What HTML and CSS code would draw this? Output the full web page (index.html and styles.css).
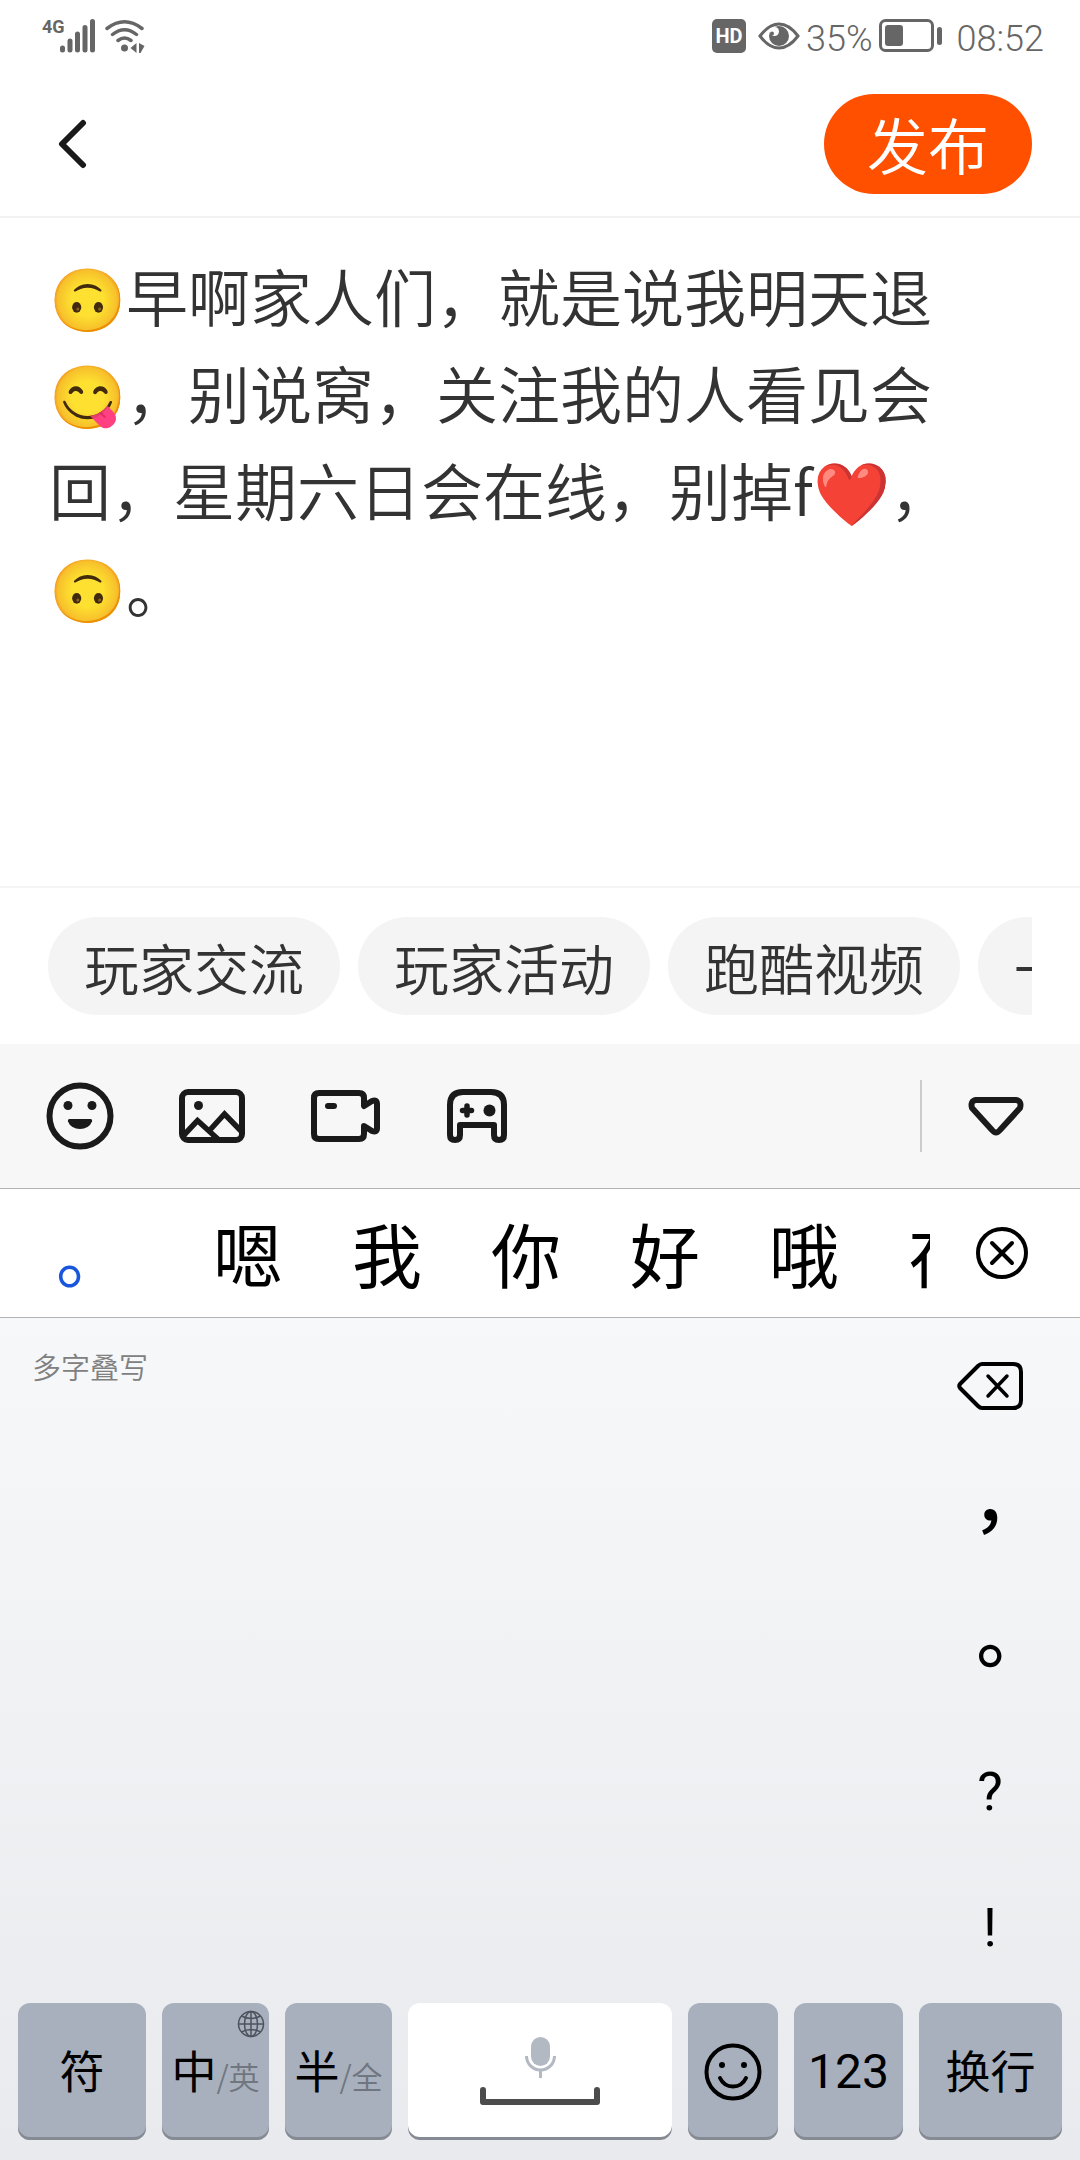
FILE: index.html
```
<!DOCTYPE html>
<html lang="zh-CN">
	<head>
		<meta charset="UTF-8">
		<meta name="viewport" content="width=device-width">
		<title>发布</title>
		<link rel="stylesheet" href="styles.css">
	</head>
	<body>
		<div class="status">
			<div class="status-left">
				<span class="net">4G</span>
				<svg width="36" height="34" viewBox="0 0 36 34" stroke="#666" stroke-width="5" stroke-linecap="round">
					<path d="M2.500 29v2M10 22v9M17.500 15v16M25 8.500v22.500M32.500 2.500v28.500"/>
				</svg>
				<svg class="wifi" width="40" height="34" viewBox="0 0 40 34" fill="none" stroke="#666" stroke-width="3.500" stroke-linecap="round">
					<path d="M2 9.500Q19.500-4 37 9.500M7.500 15.500Q19.500 6 31.500 15.500M13 21.500Q19.500 16.500 26 21.500"/>
					<circle cx="19.500" cy="29" r="3.500" fill="#666" stroke="none"/>
					<path d="M25.500 29l6-5v10zM34 24l5.500 3-4 7H34z" fill="#666" stroke="none"/>
				</svg>
			</div>
			<div class="status-right">
				<span class="hd">HD</span>
				<svg class="eye" width="42" height="28" viewBox="0 0 42 28">
					<path d="M2 14Q11 2 21 2T40 14Q31 26 21 26T2 14z" fill="none" stroke="#666" stroke-width="3"/>
					<circle cx="21" cy="14" r="10" fill="#666"/>
					<circle cx="16.500" cy="9.500" r="4.500" fill="#fff"/>
					<circle cx="14" cy="11.500" r="2" fill="#666"/>
				</svg>
				<span class="text">35%</span>
				<svg class="battery" width="64" height="34" viewBox="0 0 64 34">
					<rect x="1.500" y="1.500" width="52" height="30" rx="5" fill="none" stroke="#666" stroke-width="3"/>
					<rect x="6" y="6" width="18" height="21" rx="3" fill="#666"/>
					<rect x="58" y="8" width="5" height="18" rx="2.500" fill="#666"/>
				</svg>
				<span class="text">08:52</span>
			</div>
		</div>

		<header class="header">
			<button class="back" type="button" aria-label="返回">
				<svg width="32" height="50" viewBox="0 0 32 50" fill="none" stroke="#1a1a1a" stroke-width="6" stroke-linecap="round" stroke-linejoin="round"><path d="M27 4L6 25l21 21"/></svg>
			</button>
			<button class="publish" type="submit">发布</button>
		</header>

		<textarea class="editor" aria-label="正文" spellcheck="false">🙃早啊家人们，就是说我明天退😋，别说窝，关注我的人看见会回，星期六日会在线，别掉f❤️，🙃。</textarea>

		<nav class="topics">
			<div class="topic-list">
				<button type="button">玩家交流</button>
				<button type="button">玩家活动</button>
				<button type="button">跑酷视频</button>
				<button type="button">一</button>
			</div>
		</nav>

		<div class="toolbar">
			<button type="button" aria-label="表情">
				<svg width="68" height="68" viewBox="0 0 68 68">
					<circle cx="34" cy="34" r="30.500" fill="none" stroke="#1a1a1a" stroke-width="6"/>
					<circle cx="22" cy="23.500" r="4.500" fill="#1a1a1a"/>
					<circle cx="46" cy="23.500" r="4.500" fill="#1a1a1a"/>
					<path d="M23.500 37h21q2 0 1.500 2.500a12.500 10.500 0 0 1-24 0q-.5-2.500 1.500-2.500z" fill="#1a1a1a"/>
				</svg>
			</button>
			<button type="button" aria-label="图片">
				<svg width="68" height="56" viewBox="0 0 68 56" fill="none" stroke="#1a1a1a" stroke-width="6" stroke-linejoin="round">
					<rect x="4" y="4" width="60" height="48" rx="6"/>
					<circle cx="20.500" cy="17.500" r="4.500" fill="#1a1a1a" stroke="none"/>
					<path d="M5 48l14.500-15.500L42 53M31 43l15.500-17L64 44" stroke-width="5.500" stroke-linejoin="miter"/>
				</svg>
			</button>
			<button type="button" aria-label="视频">
				<svg width="72" height="54" viewBox="0 0 72 54" fill="none" stroke="#1a1a1a" stroke-width="6" stroke-linejoin="round" stroke-linecap="round">
					<path d="M54 17V9q0-5-5-5H9q-5 0-5 5v36q0 5 5 5h40q5 0 5-5v-8l8 5q6 2 6-4V16q0-6-6-4z" stroke="none"/>
					<path d="M54 17V9q0-5-5-5H9q-5 0-5 5v36q0 5 5 5h40q5 0 5-5v-8l8 5q5 2 5-3V15q0-5-5-3z"/>
					<path d="M18 17h6"/>
				</svg>
			</button>
			<button type="button" aria-label="游戏">
				<svg width="62" height="56" viewBox="0 0 62 56" fill="none" stroke="#1a1a1a" stroke-width="6" stroke-linejoin="round" stroke-linecap="round">
					<path d="M4 47V17Q4 4 17 4h28q13 0 13 13v30q0 5-5 5t-5-5V37H14v10q0 5-5 5t-5-5z"/>
					<path d="M21 18v9M16.500 22.500h9" stroke-width="5.500"/>
					<circle cx="43.500" cy="22.500" r="6" fill="#1a1a1a" stroke="none"/>
				</svg>
			</button>
			<button class="fold" type="button" aria-label="收起">
				<svg width="56" height="40" viewBox="0 0 56 40" fill="none" stroke="#1a1a1a" stroke-width="6" stroke-linejoin="round"><path d="M8 4h40q6 1 4 8L32 34q-4 5-8 0L4 12Q2 5 8 4z"/></svg>
			</button>
		</div>

		<div class="candidates">
			<div class="candidate-list">
				<button class="first" type="button">。</button>
				<button type="button">嗯</button>
				<button type="button">我</button>
				<button type="button">你</button>
				<button type="button">好</button>
				<button type="button">哦</button>
				<button type="button">在</button>
			</div>
			<button class="clear" type="button" aria-label="关闭">
				<svg width="52" height="52" viewBox="0 0 52 52" fill="none" stroke="#000" stroke-width="4" stroke-linecap="round"><circle cx="26" cy="26" r="24"/><path d="M16 16l20 20M36 16L16 36"/></svg>
			</button>
		</div>

		<div class="keyboard">
			<div class="writing">
				<p class="hint">多字叠写</p>
				<div class="side">
					<button type="button" aria-label="删除">
						<svg width="66" height="50" viewBox="0 0 66 50" fill="none" stroke="#000" stroke-width="4" stroke-linejoin="round" stroke-linecap="round"><path d="M25 3h31q8 0 8 8v28q0 8-8 8H25q-2 0-4-2L3 27q-1.500-2 0-4L21 5q2-2 4-2z"/><path d="M31 15l19 20M50 15L31 35" stroke-width="3.500"/></svg>
					</button>
					<button class="mark" type="button">，</button>
					<button class="mark" type="button">。</button>
					<button class="ascii" type="button">?</button>
					<button class="ascii" type="button">!</button>
				</div>
			</div>
			<div class="keys">
				<button class="key symbol" type="button">符</button>
				<button class="key lang" type="button">
					中<small>/英</small>
					<svg class="globe" width="28" height="28" viewBox="0 0 28 28" fill="none" stroke="#4d535c" stroke-width="1.500"><circle cx="14" cy="14" r="12.500"/><ellipse cx="14" cy="14" rx="6.500" ry="12.500"/><path d="M14 1.500v25M1.500 14h25M4.500 6q9.500 5 19 0M4.500 22q9.500-5 19 0"/></svg>
				</button>
				<button class="key width" type="button">半<small>/全</small></button>
				<button class="key space" type="button" aria-label="空格">
					<svg width="120" height="70" viewBox="0 0 120 70" fill="none">
						<rect x="51" y="0" width="19" height="29" rx="9.500" fill="#b3b9c3"/>
						<path d="M46.500 19a14 14 0 0 0 28 0M60.500 33v8" stroke="#b3b9c3" stroke-width="3"/>
						<path d="M3 53v12h114V53" stroke="#4c4c4c" stroke-width="6" stroke-linecap="round" stroke-linejoin="round"/>
					</svg>
				</button>
				<button class="key smile" type="button" aria-label="表情">
					<svg width="58" height="58" viewBox="0 0 58 58" fill="none" stroke="#000" stroke-width="4" stroke-linecap="round"><circle cx="29" cy="29" r="26.500"/><path d="M16 35q4 8.500 13 8.500T42 35"/><circle cx="18" cy="22" r="3" fill="#000" stroke="none"/><circle cx="40" cy="22" r="3" fill="#000" stroke="none"/></svg>
				</button>
				<button class="key digits" type="button">123</button>
				<button class="key enter" type="button">换行</button>
			</div>
		</div>
	</body>
</html>
```
FILE: styles.css
```
* {
	box-sizing: border-box;
}
body {
	margin: 0;
	min-height: 100vh;
	display: flex;
	flex-direction: column;
	background: #fff;
	color: #333;
	font-family: "Noto Sans CJK SC", sans-serif;
	font-weight: 350;
}
button {
	margin: 0;
	padding: 0;
	border: 0;
	background: none;
	color: inherit;
	font: inherit;
}
svg {
	display: block;
}

/* status bar */
.status {
	display: flex;
	justify-content: space-between;
	height: 72px;
	padding: 0 36px 0 42px;
	color: #666;
	font: 300 36px/36px Roboto, sans-serif;
}
.status-left {
	display: flex;
	padding-top: 19px;
}
.net {
	width: 18px;
	font-size: 18px;
	font-weight: 700;
	line-height: 16px;
}
.wifi {
	margin-left: 9px;
}
.status-right {
	display: flex;
	align-items: center;
}
.status .text {
	padding-top: 6px;
}
.hd {
	width: 34px;
	border-radius: 5px;
	background: #666;
	color: #fff;
	font-size: 20px;
	font-weight: 700;
	line-height: 34px;
	text-align: center;
}
.eye {
	margin: 0 6px 0 12px;
}
.battery {
	margin: 0 14px 0 6px;
}

/* header */
.header {
	display: flex;
	align-items: center;
	justify-content: space-between;
	height: 146px;
	padding: 0 48px 0 56px;
	border-bottom: 2px solid #f1f1f1;
}
.publish {
	width: 208px;
	border-radius: 50px;
	background: #ff5000;
	color: #fff;
	font-size: 61px;
	line-height: 100px;
}

.editor {
	flex: 1;
	width: 100%;
	min-height: 480px;
	padding: 29px 100px 32px 49px;
	border: 0;
	outline: 0;
	resize: none;
	overflow: hidden;
	background: #fff;
	color: #333;
	font: inherit;
	font-size: 62px;
	line-height: 97px;
}

/* topic chips */
.topics {
	padding: 29px 48px;
	border-top: 2px solid #f4f4f4;
}
.topic-list {
	display: flex;
	gap: 18px;
	overflow: hidden;
}
.topic-list button {
	flex: none;
	padding: 0 36px;
	border-radius: 49px;
	background: #f4f4f4;
	font-size: 55px;
	line-height: 98px;
}

.toolbar {
	display: flex;
	align-items: center;
	gap: 64px;
	height: 145px;
	padding-left: 46px;
	background: #f7f7f7;
	border-bottom: 1px solid #b3b3b3;
}
.fold {
	display: flex;
	align-items: center;
	height: 72px;
	margin-left: auto;
	padding: 0 56px 0 46px;
	border-left: 2px solid #ccc;
}

/* candidate words */
.candidates {
	display: flex;
	align-items: center;
	justify-content: space-between;
	height: 129px;
	padding-right: 52px;
	border-bottom: 1px solid #b3b3b3;
	color: #000;
	font-size: 70px;
	font-weight: 400;
	line-height: 120px;
}
.candidate-list {
	display: flex;
	flex: 1;
	gap: 69px;
	margin-right: 46px;
	padding-left: 56px;
	overflow: hidden;
}
.candidate-list button {
	flex: none;
}
.candidate-list .first {
	margin-right: 18px;
	color: #1a56db;
}

/* keyboard */
.keyboard {
	background: linear-gradient(#f7f8fa, #e9eaed);
	color: #000;
}
.writing {
	display: flex;
	justify-content: space-between;
}
.hint {
	margin: 28px 0 0 32px;
	color: #808080;
	font-size: 29px;
	line-height: 40px;
}
.side {
	display: grid;
	grid-auto-rows: 136px;
	width: 180px;
	font-family: Roboto, sans-serif;
	font-size: 54px;
	font-weight: 400;
}
.side button {
	display: grid;
	place-items: center;
}
.side .mark {
	padding-bottom: 12px;
	font-family: "Noto Sans CJK TC", sans-serif;
	font-size: 72px;
	font-weight: 500;
	line-height: 72px;
}
.side .ascii {
	padding-bottom: 6px;
}
.keys {
	display: flex;
	gap: 16px;
	padding: 5px 18px 20px;
	font-size: 45px;
	font-weight: 400;
}
.key {
	position: relative;
	display: flex;
	align-items: center;
	justify-content: center;
	flex: 107 0 0;
	height: 137px;
	padding-bottom: 4px;
	border-radius: 12px;
	background: #a8b0bd;
	box-shadow: inset 0 -3px #858a93;
}
.key small {
	padding-top: 12px;
	color: #707680;
	font-size: 31px;
	font-weight: 350;
}
.symbol {
	flex-grow: 128;
}
.space {
	flex-grow: 264;
	padding-bottom: 0;
	background: #fff;
}
.smile {
	flex-grow: 90;
	padding-bottom: 0;
}
.digits {
	flex-grow: 109;
	padding-bottom: 0;
	font-family: Roboto, sans-serif;
	font-size: 48px;
}
.enter {
	flex-grow: 143;
}
.globe {
	position: absolute;
	top: 7px;
	right: 4px;
}
```
